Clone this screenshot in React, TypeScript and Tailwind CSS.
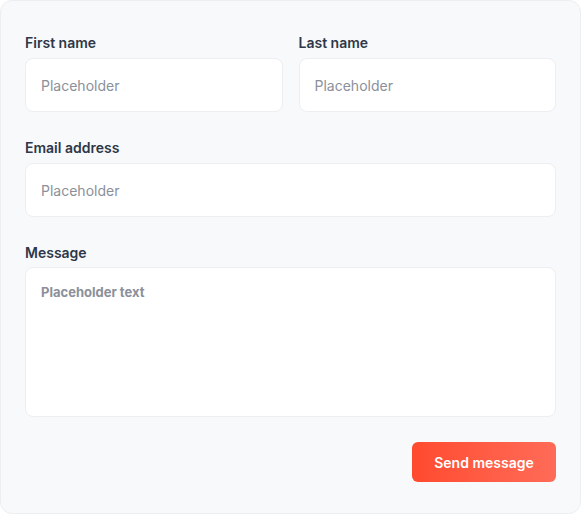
export default function App() {
  const inputCls =
    "w-full h-[54px] rounded-lg border border-[#eceef2] bg-white px-[15px] text-[14px] text-[#1f2937] placeholder:text-[#8b909a] outline-none";
  const labelCls = "block text-[14px] leading-5 font-semibold text-[#2d3748] mb-[5px]";
  return (
    <div className="w-[581px] h-[514px] bg-white" style={{ fontFamily: "Inter, 'Noto Sans', sans-serif" }}>
      <div className="w-[581px] h-[514px] rounded-xl border border-[#eceef1] bg-[#f8f9fb] px-[24px] pt-[32px]">
        <div className="grid grid-cols-2 gap-4">
          <div>
            <label className={labelCls}>First name</label>
            <input className={inputCls} placeholder="Placeholder" />
          </div>
          <div>
            <label className={labelCls}>Last name</label>
            <input className={inputCls} placeholder="Placeholder" />
          </div>
        </div>
        <div className="mt-[26px]">
          <label className={labelCls}>Email address</label>
          <input className={inputCls} placeholder="Placeholder" />
        </div>
        <div className="mt-[26px]">
          <label className={labelCls + " !mb-[4px]"}>Message</label>
          <textarea
            className="block w-full h-[150px] resize-none rounded-lg border border-[#eceef2] bg-white px-[15px] pt-[15px] text-[13px] font-bold text-[#1f2937] placeholder:text-[#8b909a] outline-none"
            placeholder="Placeholder text"
          />
        </div>
        <div className="mt-[25px] flex justify-end">
          <button className="h-10 w-[144px] rounded-md bg-gradient-to-r from-[#ff4a2e] to-[#ff6b57] text-[14px] font-semibold text-white">
            Send message
          </button>
        </div>
      </div>
    </div>
  );
}
